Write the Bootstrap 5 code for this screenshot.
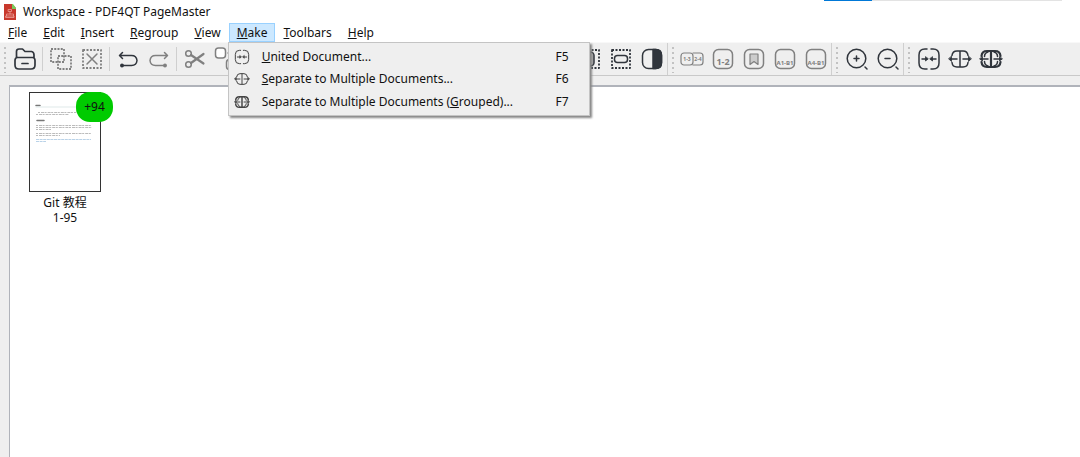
<!DOCTYPE html>
<html lang="en">
<head>
<meta charset="utf-8">
<meta name="viewport" content="width=device-width, initial-scale=1">
<title>Workspace - PDF4QT PageMaster</title>
<link href="https://cdn.jsdelivr.net/npm/bootstrap@5.3.0/dist/css/bootstrap.min.css" rel="stylesheet">
<style>
  body { font: 12px/16px "Noto Sans", "Noto Sans CJK SC", sans-serif; color: #111; background: #efefef; }
  .load-strip { height: 1px; right: 18px; left: auto; width: 22%; background: #e3e3e3; }
  .load-strip div { height: 1px; width: 20%; background: #0078d7; }
  .title-row { height: 23px; padding: 0 4px; gap: 7px; }
  .menu-row { height: 19px; }
  .menu-row .menu-link { height: 19px; line-height: 18px; padding: 0 7px; border: 1px solid transparent; background: none; color: #111; display: block; }
  .menu-row .menu-link.show { background: #cce8ff; border-color: #99d1ff; }
  .make-menu { display: flex; flex-direction: column; top: 100%; left: -1px; width: 362px; height: 74px; margin: 0; padding: 3px 2px 2px; font-size: 12px; border: 1px solid #c4c4c4; border-radius: 0; background: #efefef; box-shadow: 2px 2px 2px #888; }
  .make-menu li { flex: 1; display: flex; }
  .make-menu .dropdown-item { display: flex; align-items: center; padding: 0 18px 0 3px; line-height: 16px; color: #111; }
  .make-menu .dropdown-item svg { width: 16px; height: 16px; margin-right: 12px; color: #444; }
  .make-menu .dropdown-item kbd { margin-left: auto; padding: 0; font: inherit; color: inherit; background: none; }
  .tool-row { height: 34px; border-top: 1px solid #f8f8f8; border-bottom: 1px solid #c9c9c9; }
  .tool-set { border-right: 1px solid #cfcfcf; }
  .tool-set:last-child { border-right: 0; }
  .set-main { width: 668px; }
  .set-title { width: 164px; }
  .grip { flex: 0 0 9px; height: 27px; background: linear-gradient(#c2c2c2, #c2c2c2) 4px 1px / 2px 2px no-repeat, repeating-linear-gradient(#c2c2c2 0 2px, #efefef 2px 5px) 4px 1px / 2px 27px no-repeat; }
  .divide { flex: 0 0 5px; height: 24px; background: linear-gradient(#cfcfcf, #cfcfcf) 2px 0 / 1px 100% no-repeat; }
  .tool { width: 31px; height: 31px; min-width: 0; padding: 0; border: 0; background: none; color: #30353c; display: flex; align-items: center; justify-content: center; }
  .tool:disabled { color: #808080; }
  .tool svg { width: 24px; height: 24px; }
  svg { fill: none; stroke: currentColor; stroke-width: 1.5; stroke-linecap: round; stroke-linejoin: round; flex: none; }
  svg text { fill: currentColor; stroke: none; font-weight: 700; text-anchor: middle; }
  .sheet-area { margin: 9px 0 0 9px; border: solid #b0b3ba; border-width: 2px 0 0 1px; padding: 5px 0 0 19px; background: #fff; }
  .sheet { width: 72px; }
  .sheet-page { width: 72px; height: 100px; border: 1px solid #333; background: #fff; }
  .sheet-count { top: 0; left: 47px; width: 37px; height: 30px; border-radius: 14px; background: #00cb00; font-size: 12px; line-height: 30px; }
  .sheet-name { margin-top: 3px; line-height: 15px; }
</style>
</head>
<body class="d-flex flex-column vh-100 overflow-hidden">
<svg class="d-none" aria-hidden="true">
  <symbol id="unite" viewBox="0 0 24 24"><path d="M10 2H8Q2 2 2 8v8q0 6 6 6h2M14 2h2q6 0 6 6v8q0 6-6 6h-2M5 12h5M19 12h-5"/><path fill="currentColor" stroke-width=".8" d="M8.500 10v4l2.500-2zM15.500 10v4L13 12z"/></symbol>
  <symbol id="split" viewBox="0 0 24 24"><path d="M4 8.500Q4.500 4 9 4h6q4.500 0 5 4.500M4 15.500Q4.500 20 9 20h6q4.500 0 5-4.500M12 4v16M9 12H3M15 12h6"/><path fill="currentColor" stroke-width=".8" d="M3.500 9.500v5L.8 12zM20.500 9.500v5l2.700-2.500z"/></symbol>
  <symbol id="split-group" viewBox="0 0 24 24"><path stroke-width="2.200" d="M2.500 9Q3 4 8 4h8q5 0 5.500 5M2.500 15q.5 5 5.500 5h8q5 0 5.500-5M12 4v16"/><path d="M5.500 9.500Q5.500 6 9 5M5.500 14.500q0 3.500 3.500 4.500M18.500 9.500Q18.500 6 15 5M18.500 14.500q0 3.500-3.500 4.500M9 12H2M15 12h7"/><path fill="currentColor" stroke-width=".8" d="M3.500 10v4L.8 12zM20.500 10v4l2.700-2z"/></symbol>
</svg>

<div class="load-strip position-absolute" aria-hidden="true"><div></div></div>
<header class="bg-white">
  <div class="title-row d-flex align-items-center">
    <svg width="12" height="16" viewBox="0 0 12 16" aria-hidden="true"><path fill="#c8382c" stroke="none" d="M0 0h8l4 4v12H0z"/><path fill="#7bc95b" stroke="none" d="M8 0h1l3 4v1H8z"/><path stroke="#eba199" stroke-width=".8" d="M4.500 7.500h3v-2h-3zM6 8v2M2.500 12v-2h7v2M2 12h8v1.500H2z"/></svg>
    <span>Workspace - PDF4QT PageMaster</span>
  </div>
  <nav class="menu-row d-flex" aria-label="Main menu">
    <button type="button" class="menu-link"><u>F</u>ile</button>
    <button type="button" class="menu-link"><u>E</u>dit</button>
    <button type="button" class="menu-link"><u>I</u>nsert</button>
    <button type="button" class="menu-link"><u>R</u>egroup</button>
    <button type="button" class="menu-link"><u>V</u>iew</button>
    <div class="dropdown">
      <button type="button" class="menu-link show" aria-expanded="true"><u>M</u>ake</button>
      <ul class="dropdown-menu make-menu">
        <li><button type="button" class="dropdown-item"><svg><use href="#unite"/></svg><span><u>U</u>nited Document...</span><kbd>F5</kbd></button></li>
        <li><button type="button" class="dropdown-item"><svg><use href="#split"/></svg><span><u>S</u>eparate to Multiple Documents...</span><kbd>F6</kbd></button></li>
        <li><button type="button" class="dropdown-item"><svg><use href="#split-group"/></svg><span>Separate to Multiple Documents (<u>G</u>rouped)...</span><kbd>F7</kbd></button></li>
      </ul>
    </div>
    <button type="button" class="menu-link"><u>T</u>oolbars</button>
    <button type="button" class="menu-link"><u>H</u>elp</button>
  </nav>
</header>

<div class="tool-row d-flex flex-shrink-0" role="toolbar" aria-label="Tools">
  <div class="tool-set set-main d-flex align-items-center">
    <span class="grip"></span>
    <button type="button" class="tool" aria-label="Open"><svg viewBox="0 0 24 24"><path stroke-width="1.700" d="M3.500 10V4.500Q3.500 2 6 2h3.500L12 4.500h6.500Q21 5 21 8v2.500M4.500 10.500h15q2.500 0 2.500 3v4.500q0 4-4 4H6q-4 0-4-4v-4.500q0-3 2.500-3zM9 16.500h6"/></svg></button>
    <span class="divide"></span>
    <button type="button" class="tool" aria-label="Clone selection" disabled><svg viewBox="0 0 24 24"><path stroke-width="1.800" stroke-dasharray="2 1.250" stroke-linecap="butt" d="M2 2h13v13H2zM9 9h13v13H9z"/></svg></button>
    <button type="button" class="tool" aria-label="Remove selection" disabled><svg viewBox="0 0 24 24"><path stroke-width="1.800" stroke-dasharray="2 1.500" stroke-linecap="butt" d="M3 3h18v18H3z"/><path d="m7 7 10 10M17 7 7 17"/></svg></button>
    <span class="divide"></span>
    <button type="button" class="tool" aria-label="Undo"><svg viewBox="0 0 24 24"><path d="M6.500 5.500 3.500 8.500l3 3M4 8.500h11.500q5 0 5.500 5-.5 5-5.500 5H6"/><circle cx="6" cy="18.500" r="1.200" fill="currentColor"/></svg></button>
    <button type="button" class="tool" aria-label="Redo" disabled><svg viewBox="0 0 24 24"><path d="m17.500 5.500 3 3-3 3M20 8.500H8.500q-5 0-5.500 5 .5 5 5.500 5H18"/><circle cx="18" cy="18.500" r="1.200" fill="currentColor"/></svg></button>
    <span class="divide"></span>
    <button type="button" class="tool" aria-label="Cut" disabled><svg viewBox="0 0 24 24"><circle cx="5.500" cy="6.500" r="2.800"/><circle cx="5.500" cy="17.500" r="2.800"/><path stroke-width="2.200" d="M8 8l12.500 8.500M8 16l12.500-9"/></svg></button>
    <button type="button" class="tool" aria-label="Replace" disabled><svg viewBox="0 0 24 24"><rect x="1.500" y="1" width="10" height="10" rx="3" fill="#fff"/><rect x="12.500" y="12.500" width="10" height="10" rx="3"/><path d="M14 6h4v3"/></svg></button>
    <button type="button" class="tool ms-auto" aria-label="Select portrait"><svg viewBox="0 0 24 24"><path stroke-width="1.800" stroke-dasharray="2 1.500" stroke-linecap="butt" d="M3 3h18v18H3z"/><rect x="8" y="5" width="8" height="14" rx="3.500" fill="#aaa"/></svg></button>
    <button type="button" class="tool" aria-label="Select landscape"><svg viewBox="0 0 24 24"><path stroke-width="1.800" stroke-dasharray="2 1.500" stroke-linecap="butt" d="M3 3h18v18H3z"/><rect x="5.500" y="8.500" width="13" height="7" rx="3"/></svg></button>
    <button type="button" class="tool" aria-label="Invert selection"><svg viewBox="0 0 24 24"><rect x="2.500" y="2.500" width="19" height="19" rx="6"/><path fill="currentColor" d="M13 2.500h3q5.500 0 5.500 5.500v8q0 5.500-5.500 5.500h-3z"/></svg></button>
  </div>
  <div class="tool-set set-title d-flex align-items-center">
    <span class="grip"></span>
    <button type="button" class="tool" aria-label="Regroup pairs" disabled><svg viewBox="0 0 24 24"><rect x="1" y="6" width="12" height="12" rx="3" stroke-width="1.200"/><path stroke-width="1.200" d="M13 6h7q3 0 3 3v6q0 3-3 3h-7"/><text x="7" y="14" font-size="5">1-3</text><text x="18" y="14" font-size="5">2-4</text></svg></button>
    <button type="button" class="tool" aria-label="Regroup even and odd" disabled><svg viewBox="0 0 24 24"><rect x="2.500" y="2.500" width="19" height="19" rx="5"/><text x="12" y="18" font-size="9">1-2</text></svg></button>
    <button type="button" class="tool" aria-label="Regroup by bookmarks" disabled><svg viewBox="0 0 24 24"><rect x="2.500" y="2.500" width="19" height="19" rx="5"/><path fill="#ccc" stroke-width="1.200" d="M8 7h8v10.500l-4-3-4 3z"/></svg></button>
    <button type="button" class="tool" aria-label="Regroup alternating pages" disabled><svg viewBox="0 0 24 24"><rect x="2.500" y="2.500" width="19" height="19" rx="5"/><text x="12" y="17.500" font-size="6">A1-B1</text></svg></button>
    <button type="button" class="tool" aria-label="Regroup alternating pages, reversed" disabled><svg viewBox="0 0 24 24"><rect x="2.500" y="2.500" width="19" height="19" rx="5"/><text x="12" y="17.500" font-size="6">A4-B1</text></svg></button>
  </div>
  <div class="tool-set d-flex align-items-center">
    <span class="grip"></span>
    <button type="button" class="tool" aria-label="Zoom in"><svg viewBox="0 0 24 24"><circle cx="11.500" cy="11.500" r="9.300"/><path d="m20 20 2 2M11.500 9v5M9 11.500h5"/></svg></button>
    <button type="button" class="tool" aria-label="Zoom out"><svg viewBox="0 0 24 24"><circle cx="11.500" cy="11.500" r="9.300"/><path d="m20 20 2 2M9 11.500h5"/></svg></button>
  </div>
  <div class="tool-set d-flex align-items-center">
    <span class="grip"></span>
    <button type="button" class="tool" aria-label="United document"><svg><use href="#unite"/></svg></button>
    <button type="button" class="tool" aria-label="Separate documents"><svg><use href="#split"/></svg></button>
    <button type="button" class="tool" aria-label="Separate documents, grouped"><svg><use href="#split-group"/></svg></button>
  </div>
</div>

<main class="sheet-area flex-grow-1">
  <div class="sheet position-relative text-center">
    <div class="sheet-page"><svg class="d-block" width="70" height="98" viewBox="0 0 70 98" stroke-linecap="butt" aria-hidden="true">
      <path stroke="#777" stroke-width="1.500" d="M6 12.500h4M7 27.500h7"/>
      <path stroke="#dfe9e9" stroke-width="1" d="M6 14h40"/>
      <g stroke-width="1" style="stroke-linecap: butt"><path stroke="#bbb" stroke-dasharray="2 1 3 .6" d="M8 19.500h38M6 21.500h33M6 32.500h55M6 34.500h56M6 36.500h15M6 40.500h55M6 42.500h24"/>
      <path stroke="#b9d2e8" stroke-dasharray="3 .6" d="M6 46.500h55M6 48.500h10"/></g></svg></div>
    <span class="sheet-count position-absolute">+94</span>
    <div class="sheet-name">Git 教程<br>1-95</div>
  </div>
</main>
<script src="https://cdn.jsdelivr.net/npm/bootstrap@5.3.0/dist/js/bootstrap.bundle.min.js"></script>
</body>
</html>
